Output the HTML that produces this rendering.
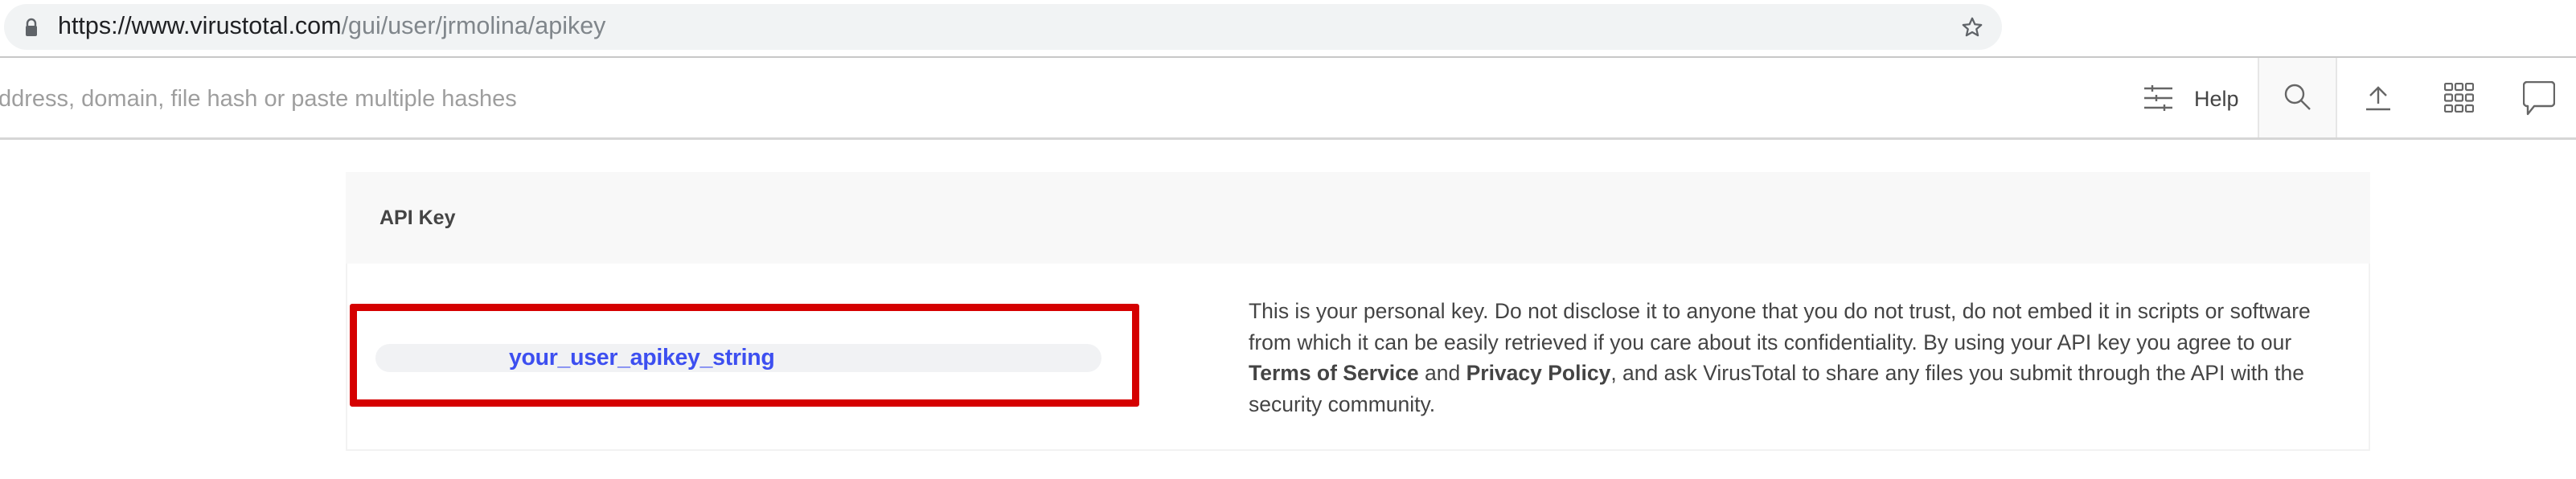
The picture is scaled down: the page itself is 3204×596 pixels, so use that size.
<!DOCTYPE html>
<html><head><meta charset="utf-8"><style>
*{margin:0;padding:0;box-sizing:border-box}
body{width:3204px;height:596px;background:#fff;font-family:"Liberation Sans",sans-serif;position:relative;overflow:hidden}
.abs{position:absolute}
</style></head><body>
<div class="abs" style="left:5px;top:5px;width:2485px;height:57px;background:#f1f3f4;border-radius:29px"></div>
<svg class="abs" style="left:30px;top:22px" width="18" height="24" viewBox="0 0 18 24"><path d="M4 11V7a5 5 0 0 1 10 0v4" fill="none" stroke="#5f6368" stroke-width="2.4"/><rect x="2" y="10" width="14" height="13" rx="2" fill="#5f6368"/></svg>
<div class="abs" style="left:72px;top:15px;font-size:30.5px;color:#202124;white-space:nowrap">https://www.virustotal.com<span style="color:#80868b">/gui/user/jrmolina/apikey</span></div>
<svg class="abs" style="left:2438px;top:19px" width="30" height="30" viewBox="0 0 24 24"><path d="M12 3l2.7 6 6.3.6-4.8 4.2 1.5 6.3L12 16.8 6.3 20.1l1.5-6.3L3 9.6 9.3 9z" fill="none" stroke="#5f6368" stroke-width="1.8" stroke-linejoin="round"/></svg>
<div class="abs" style="left:0;top:70px;width:3204px;height:2px;background:#c8c8c8"></div>
<div class="abs" style="left:0;top:171px;width:3204px;height:3px;background:#d6d6d6"></div>
<div class="abs" style="left:-2px;top:107px;font-size:29px;color:#9e9e9e;white-space:nowrap">ddress, domain, file hash or paste multiple hashes</div>
<svg class="abs" style="left:2667px;top:106px" width="35" height="32" viewBox="0 0 35 32" stroke="#666" stroke-width="2.4"><path d="M0 4h35M0 16h35M0 28h35M10 0v8M15 12v8M25 24v8"/></svg>
<div class="abs" style="left:2729px;top:108px;font-size:27px;color:#444">Help</div>
<div class="abs" style="left:2808px;top:72px;width:99px;height:99px;background:#f9f9f9;border-left:2px solid #e6e6e6;border-right:2px solid #e6e6e6"></div>
<svg class="abs" style="left:2841px;top:104px" width="34" height="34" viewBox="0 0 34 34" fill="none" stroke="#666" stroke-width="2.4"><circle cx="13" cy="13" r="11"/><path d="M21 21l11 11"/></svg>
<svg class="abs" style="left:2942px;top:106px" width="32" height="32" viewBox="0 0 32 32" fill="none" stroke="#666" stroke-width="2.4"><path d="M16 3v20M6 13L16 3l10 10M1 30h30"/></svg>
<svg class="abs" style="left:3040px;top:103px" width="37" height="37" viewBox="0 0 37 37" fill="none" stroke="#666" stroke-width="2.2"><g id="r"><rect x="1" y="1" width="9" height="8" rx="1.5"/><rect x="14" y="1" width="9" height="8" rx="1.5"/><rect x="27" y="1" width="9" height="8" rx="1.5"/></g><use href="#r" y="13.5"/><use href="#r" y="27"/></svg>
<svg class="abs" style="left:3138px;top:101px" width="40" height="43" viewBox="0 0 40 43" fill="none" stroke="#666" stroke-width="2.4" stroke-linejoin="round"><path d="M5 1h30a4 4 0 0 1 4 4v22a4 4 0 0 1-4 4H14l-8 10v-10H5a4 4 0 0 1-4-4V5a4 4 0 0 1 4-4z"/></svg>
<div class="abs" style="left:430px;top:214px;width:2518px;height:347px;border:2px solid #f2f2f2;border-top:none"></div>
<div class="abs" style="left:430px;top:214px;width:2518px;height:114px;background:#f8f8f8"></div>
<div class="abs" style="left:472px;top:257px;font-size:25px;font-weight:bold;color:#444">API Key</div>
<div class="abs" style="left:435px;top:378px;width:982px;height:128px;border:9px solid #d50000;border-radius:3px"></div>
<div class="abs" style="left:467px;top:428px;width:903px;height:35px;background:#f1f2f4;border-radius:18px"></div>
<div class="abs" style="left:633px;top:429px;font-size:28.5px;font-weight:bold;color:#3d4ff0;letter-spacing:-0.3px;white-space:nowrap">your_user_apikey_string</div>
<div class="abs" style="left:1553px;top:368px;width:1500px;font-size:26.5px;line-height:38.5px;color:#444;white-space:nowrap">This is your personal key. Do not disclose it to anyone that you do not trust, do not embed it in scripts or software<br>from which it can be easily retrieved if you care about its confidentiality. By using your API key you agree to our<br><b>Terms of Service</b> and <b>Privacy Policy</b>, and ask VirusTotal to share any files you submit through the API with the<br>security community.</div>
</body></html>
